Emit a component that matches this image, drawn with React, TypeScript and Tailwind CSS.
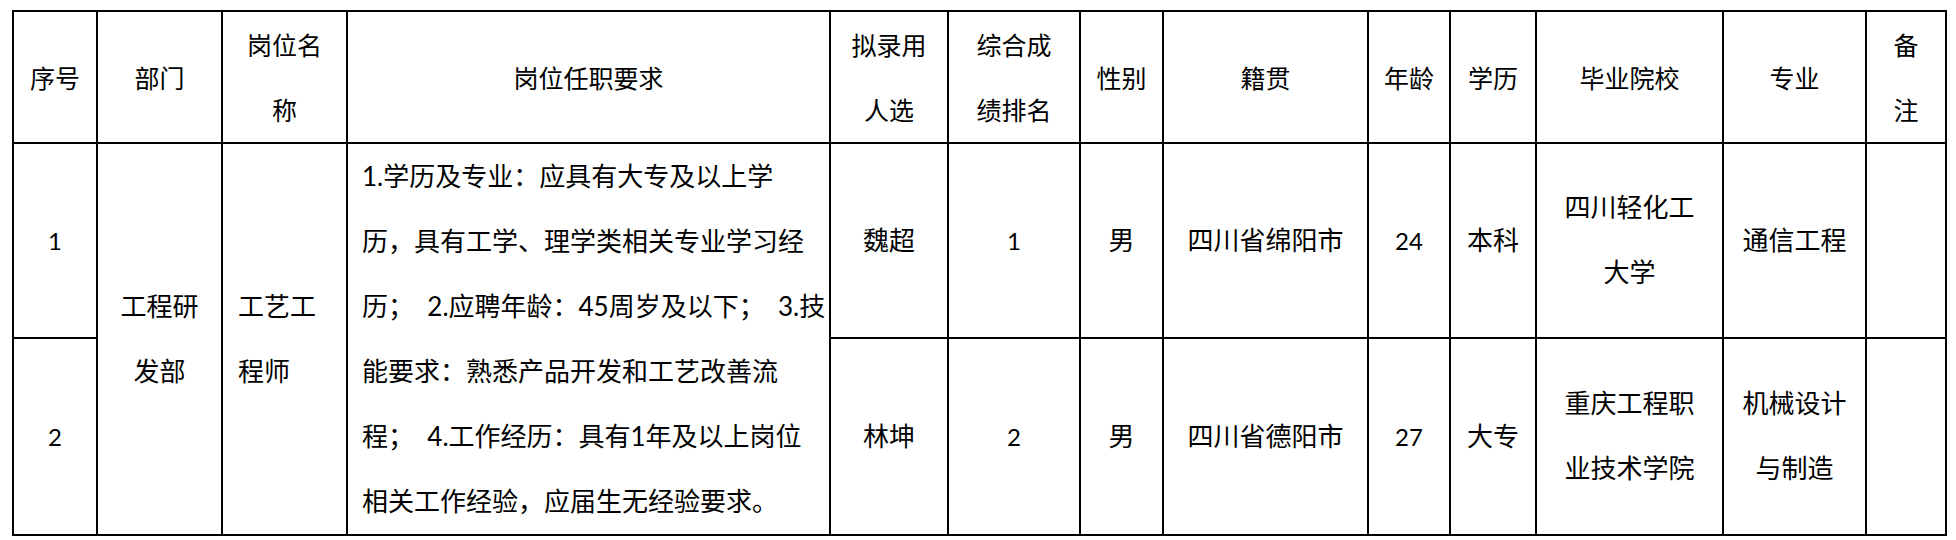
import React from 'react';

const head = "font-['Noto_Sans_CJK_SC',sans-serif] text-[25px] leading-[65px] text-black";
const body = "font-['Lato','Noto_Sans_CJK_SC',sans-serif] text-[26px] leading-[65px] text-black";
const cell = 'border-2 border-black p-0 text-center align-middle';

const Lines: React.FC<{ lines: string[] }> = ({ lines }) => (
    <>
        {lines.map((l) => (
            <div key={l} className="whitespace-nowrap">{l}</div>
        ))}
    </>
);

const requirement = [
    '1.学历及专业：应具有大专及以上学',
    '历，具有工学、理学类相关专业学习经',
    '历；  2.应聘年龄：45周岁及以下；  3.技',
    '能要求：熟悉产品开发和工艺改善流',
    '程；  4.工作经历：具有1年及以上岗位',
    '相关工作经验，应届生无经验要求。',
];

const App: React.FC = () => {
    return (
        <div className="w-[1956px] h-[540px] bg-white pt-[10px] pl-[12px]">
            <table className="table-fixed border-collapse w-[1933px]">
                <colgroup>
                    <col className="w-[84px]" />
                    <col className="w-[125px]" />
                    <col className="w-[125px]" />
                    <col className="w-[483px]" />
                    <col className="w-[118px]" />
                    <col className="w-[132px]" />
                    <col className="w-[83px]" />
                    <col className="w-[205px]" />
                    <col className="w-[82px]" />
                    <col className="w-[86px]" />
                    <col className="w-[187px]" />
                    <col className="w-[143px]" />
                    <col className="w-[80px]" />
                </colgroup>
                <thead>
                    <tr className={`h-[130px] ${head}`}>
                        <th className={`${cell} font-normal`}>序号</th>
                        <th className={`${cell} font-normal`}>部门</th>
                        <th className={`${cell} font-normal`}><Lines lines={['岗位名', '称']} /></th>
                        <th className={`${cell} font-normal`}>岗位任职要求</th>
                        <th className={`${cell} font-normal`}><Lines lines={['拟录用', '人选']} /></th>
                        <th className={`${cell} font-normal`}><Lines lines={['综合成', '绩排名']} /></th>
                        <th className={`${cell} font-normal`}>性别</th>
                        <th className={`${cell} font-normal`}>籍贯</th>
                        <th className={`${cell} font-normal`}>年龄</th>
                        <th className={`${cell} font-normal`}>学历</th>
                        <th className={`${cell} font-normal`}>毕业院校</th>
                        <th className={`${cell} font-normal`}>专业</th>
                        <th className={`${cell} font-normal`}><Lines lines={['备', '注']} /></th>
                    </tr>
                </thead>
                <tbody className={body}>
                    <tr className="h-[194px]">
                        <td className={`${cell} text-[24px]`}>1</td>
                        <td className={cell} rowSpan={2}><Lines lines={['工程研', '发部']} /></td>
                        <td className={`${cell} text-left pl-[15px]`} rowSpan={2}><Lines lines={['工艺工', '程师']} /></td>
                        <td className={`${cell} text-left pl-[14px] align-top`} rowSpan={2}>
                            {requirement.map((l) => (
                                <div key={l} className="whitespace-pre">{l}</div>
                            ))}
                        </td>
                        <td className={cell}>魏超</td>
                        <td className={`${cell} text-[24px]`}>1</td>
                        <td className={cell}>男</td>
                        <td className={cell}>四川省绵阳市</td>
                        <td className={`${cell} text-[24px]`}>24</td>
                        <td className={cell}>本科</td>
                        <td className={cell}><Lines lines={['四川轻化工', '大学']} /></td>
                        <td className={cell}>通信工程</td>
                        <td className={cell}></td>
                    </tr>
                    <tr className="h-[196px]">
                        <td className={`${cell} text-[24px]`}>2</td>
                        <td className={cell}>林坤</td>
                        <td className={`${cell} text-[24px]`}>2</td>
                        <td className={cell}>男</td>
                        <td className={cell}>四川省德阳市</td>
                        <td className={`${cell} text-[24px]`}>27</td>
                        <td className={cell}>大专</td>
                        <td className={cell}><Lines lines={['重庆工程职', '业技术学院']} /></td>
                        <td className={cell}><Lines lines={['机械设计', '与制造']} /></td>
                        <td className={cell}></td>
                    </tr>
                </tbody>
            </table>
        </div>
    );
};

export default App;
